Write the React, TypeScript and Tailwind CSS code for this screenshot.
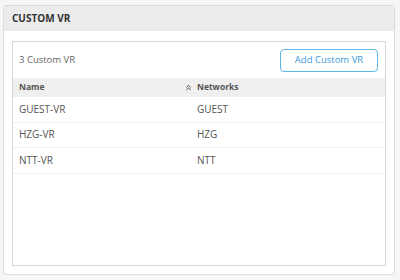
import { ChevronsUp } from 'lucide-react';

const rows = [
  { name: 'GUEST-VR', network: 'GUEST' },
  { name: 'HZG-VR', network: 'HZG' },
  { name: 'NTT-VR', network: 'NTT' },
];

export default function App() {
  return (
    <div className="w-[400px] h-[280px] bg-[#f6f6f6] pt-[5px] pl-[3px] text-[#555] font-['Open_Sans',sans-serif]">
      <div className="w-[392px] h-[270px] bg-white border border-[#dcdcdc] rounded-[3px] flex flex-col">
        {/* Panel header */}
        <div className="h-[25px] bg-[#ececec] flex items-center px-[8px] text-[10px] font-bold text-[#333]">
          CUSTOM VR
        </div>

        {/* Inner card */}
        <div className="mt-[10px] mx-[8px] h-[225px] border border-[#d6d6d6] flex flex-col">
          <div className="h-[36px] flex items-center justify-between pl-[6px] pr-[7px]">
            <span className="text-[9.5px] text-[#666]">3 Custom VR</span>
            <button className="w-[98px] h-[23px] border border-[#5cb8e6] rounded-[4px] text-[9.5px] text-[#3a9ad9] bg-white">
              Add Custom VR
            </button>
          </div>

          <div className="h-[19px] bg-[#efefef] flex items-center text-[8.5px] font-bold text-[#555]">
            <div className="w-[184px] flex items-center justify-between pl-[6px] pr-[4px]">
              <span>Name</span>
              <ChevronsUp className="w-[9px] h-[9px] text-[#444]" strokeWidth={2.5} />
            </div>
            <span>Networks</span>
          </div>

          {rows.map((r) => (
            <div key={r.name} className="h-[25.5px] flex items-center border-b border-[#f0f0f0] text-[10px] text-[#555]">
              <div className="w-[184px] pl-[6px]">{r.name}</div>
              <div>{r.network}</div>
            </div>
          ))}
        </div>
      </div>
    </div>
  );
}
